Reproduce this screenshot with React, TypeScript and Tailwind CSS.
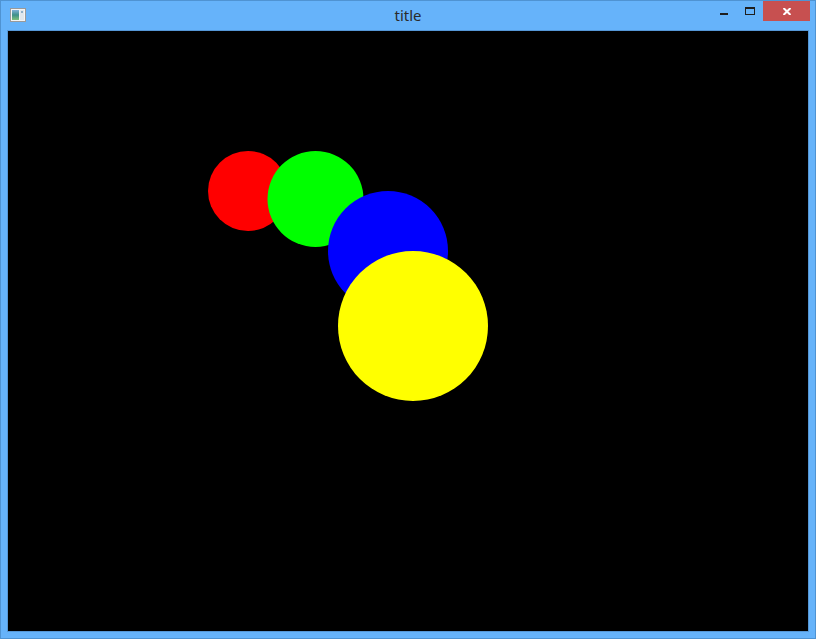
import React from "react";

const circles = [
  { cx: 240, cy: 160, r: 40, fill: "#ff0000" },
  { cx: 307.5, cy: 168, r: 48, fill: "#00ff00" },
  { cx: 380, cy: 220, r: 60, fill: "#0000ff" },
  { cx: 405, cy: 295, r: 75, fill: "#ffff00" },
];

function AppIcon() {
  return (
    <svg width="16" height="14" viewBox="0 0 16 14" className="block">
      <rect x="0.5" y="0.5" width="15" height="13" fill="#f4f4f4" stroke="#9a9a9a" />
      <defs>
        <linearGradient id="ig" x1="0" y1="0" x2="0" y2="1">
          <stop offset="0" stopColor="#7fb0d8" />
          <stop offset="0.5" stopColor="#3f8f8a" />
          <stop offset="1" stopColor="#7fc07a" />
        </linearGradient>
      </defs>
      <rect x="2" y="2" width="7" height="10" fill="url(#ig)" />
      <rect x="10" y="2" width="4" height="10" fill="#dfe6ec" />
      <rect x="11" y="3" width="2" height="2" fill="#8fb0c8" />
    </svg>
  );
}

export default function App() {
  return (
    <div className="w-[816px] h-[639px] bg-[#66b3fa] border border-[#4f93d2] flex flex-col font-['Noto_Sans','Open_Sans',sans-serif]">
      {/* title bar */}
      <div className="h-[29px] grid grid-cols-[1fr_auto_1fr] items-start">
        <div className="pl-[9px] pt-[7px]">
          <AppIcon />
        </div>
        <div className="pt-[5px] text-[15px] leading-[18px] text-[#2a2a2a]">title</div>
        <div className="flex justify-end items-start pr-[5px]">
          <button className="w-[26px] h-[20px] flex items-center justify-center">
            <span className="block w-[8px] h-[2px] bg-[#1e1e1e] mt-[6px]" />
          </button>
          <button className="w-[26px] h-[20px] flex items-start justify-center">
            <span className="block w-[10px] h-[8px] border border-t-2 border-[#1e1e1e] mt-[6px]" />
          </button>
          <button className="w-[47px] h-[20px] bg-[#c75050] flex items-center justify-center">
            <svg width="8" height="7" viewBox="0 0 8 7">
              <path d="M0.5 0 L7.5 7 M7.5 0 L0.5 7" stroke="#ffffff" strokeWidth="2" />
            </svg>
          </button>
        </div>
      </div>

      {/* client area */}
      <div className="px-[6px]">
        <div className="border border-[#5597d6]">
          <div className="w-[800px] h-[600px] bg-black">
            <svg width="800" height="600" viewBox="0 0 800 600" className="block">
              {circles.map((c, i) => (
                <circle key={i} cx={c.cx} cy={c.cy} r={c.r} fill={c.fill} />
              ))}
            </svg>
          </div>
        </div>
      </div>
    </div>
  );
}
